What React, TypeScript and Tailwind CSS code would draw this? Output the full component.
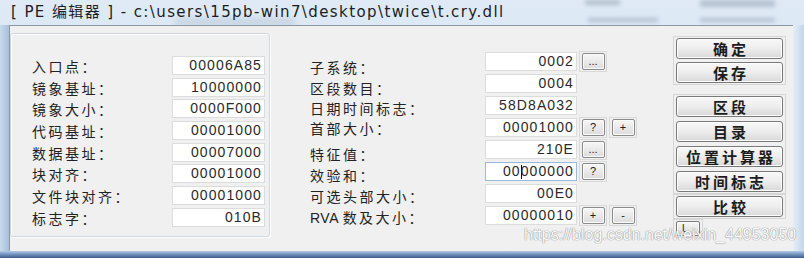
import React from "react";

const leftRows = [
  { label: "入口点：", value: "00006A85" },
  { label: "镜象基址：", value: "10000000" },
  { label: "镜象大小：", value: "0000F000" },
  { label: "代码基址：", value: "00001000" },
  { label: "数据基址：", value: "00007000" },
  { label: "块对齐：", value: "00001000" },
  { label: "文件块对齐：", value: "00001000" },
  { label: "标志字：", value: "010B" },
];

type MidRow = { label: string; pre?: string; value: string; off: string; btns: string[]; focus?: boolean };

const midRows: MidRow[] = [
  { label: "子系统：", value: "0002", off: "translate-y-[6px]", btns: ["..."] },
  { label: "区段数目：", value: "0004", off: "translate-y-[5px]", btns: [] },
  { label: "日期时间标志：", value: "58D8A032", off: "translate-y-[3px]", btns: [] },
  { label: "首部大小：", value: "00001000", off: "translate-y-[1px]", btns: ["?", "+"] },
  { label: "特征值：", value: "210E", off: "translate-y-[5px]", btns: ["..."] },
  { label: "效验和：", value: "00000000", off: "translate-y-[4px]", btns: ["?"], focus: true },
  { label: "可选头部大小：", value: "00E0", off: "translate-y-[3px]", btns: [] },
  { label: "数及大小：", pre: "RVA ", value: "00000010", off: "translate-y-[2px]", btns: ["+", "-"] },
];

const labelCls =
  "font-['Noto_Sans_CJK_SC',sans-serif] text-[14px] leading-[19px] tracking-[2.5px] text-[#222222] whitespace-nowrap";

function Field({ value, focus, w }: { value: string; focus?: boolean; w: string }) {
  return (
    <div
      className={`${w} h-[19px] shrink-0 bg-white border ${
        focus ? "border-[#9bb9da]" : "border-[#dcdcdc]"
      } flex items-center justify-end pr-[2px] font-['Liberation_Sans',Arial,sans-serif] text-[14px] leading-[17px] tracking-[1.1px] text-[#2a2a2a]`}
    >
      {focus ? (
        <>
          {value.slice(0, 2)}
          <span className="inline-block w-[1px] h-[14px] bg-black -mr-[1px]" />
          {value.slice(2)}
        </>
      ) : (
        value
      )}
    </div>
  );
}

function SmallBtn({ t }: { t: string }) {
  return (
    <div className="w-[28px] h-[21px] border border-[#d9d9d9] flex items-center justify-center">
      <div className="w-[23px] h-[17px] rounded-[2px] border border-[#8a8a8a] bg-gradient-to-b from-[#f7f7f7] to-[#dcdcdc] shadow-[inset_0_0_0_1px_#fbfbfb] flex items-center justify-center font-['Liberation_Sans',Arial,sans-serif] text-[11px] leading-none text-[#222222]">
        {t}
      </div>
    </div>
  );
}

function Btn({ t }: { t: string }) {
  return (
    <div className="w-[107px] h-[21px] rounded-[3px] border border-[#7a7a7a] bg-gradient-to-b from-[#f8f8f8] via-[#ededed] to-[#d8d8d8] shadow-[inset_0_0_0_1px_#fcfcfc] flex items-center justify-center font-['Noto_Sans_CJK_SC',sans-serif] font-bold text-[15px] leading-none tracking-[3px] pl-[3px] text-[#1c1c1c]">
      {t}
    </div>
  );
}

export default function App() {
  return (
    <div className="w-[804px] h-[258px] relative overflow-hidden flex flex-col bg-gradient-to-b from-[#dfeaf6] via-[#d3e2f2] to-[#c4d7ec]">
      {/* blurred backdrop behind the glass title bar */}
      <div className="absolute left-[585px] top-[0px] w-[35px] h-[5px] bg-[#8794a3] blur-[2px] opacity-50" />
      <div className="absolute left-[700px] top-[0px] w-[75px] h-[7px] bg-[#8794a3] blur-[2px] opacity-45" />
      <div className="absolute left-[588px] top-[18px] w-[70px] h-[4px] bg-[#7f8fa2] blur-[2px] opacity-45" />
      <div className="absolute left-[700px] top-[18px] w-[75px] h-[4px] bg-[#7f8fa2] blur-[2px] opacity-45" />
      <div className="absolute left-[175px] top-[19px] w-[120px] h-[6px] bg-[#9aa9b8] blur-[3px] opacity-40" />

      <div className="relative h-[25px] pl-[11px] flex items-center font-['DejaVu_Sans','Noto_Sans_CJK_SC',sans-serif] text-[15px] tracking-[1.4px] text-[#1c1c24] whitespace-nowrap">
        [ PE 编辑器 ] - c:\users\15pb-win7\desktop\twice\t.cry.dll
      </div>

      <div className="relative flex h-[226px]">
        <div className="w-[9px] bg-gradient-to-r from-[#c8daed] to-[#a8bfd9]" />
        <div className="w-[784px] bg-[#f0f0f0] border-l border-t border-[#8d97a2] flex items-start">
          {/* left group */}
          <div className="mt-[7px] w-[260px] h-[204px] border border-[#d2d7dc] rounded-[3px] shadow-[inset_1px_1px_0_#ffffff,1px_1px_0_#ffffff] pt-[22px] pl-[21px] flex flex-col gap-[2.7px]">
            {leftRows.map((r) => (
              <div key={r.label} className="flex items-start h-[19px]">
                <div className={`w-[140px] translate-y-[1px] ${labelCls}`}>{r.label}</div>
                <Field value={r.value} w="w-[93px]" />
              </div>
            ))}
          </div>

          {/* middle */}
          <div className="ml-[40px] w-[330px] pt-[24.5px] flex flex-col">
            {midRows.map((r) => (
              <div key={r.label} className="flex items-center h-[22px]">
                <div className={`w-[175px] ${r.off} ${labelCls}`}>
                  {r.pre ? (
                    <span className="font-['Liberation_Sans',Arial,sans-serif] tracking-[0.5px]">{r.pre}</span>
                  ) : null}
                  {r.label}
                </div>
                <Field value={r.value} focus={r.focus} w="w-[92px]" />
                <div className="ml-[2px] flex gap-[2px]">
                  {r.btns.map((b, i) => (
                    <SmallBtn key={i} t={b} />
                  ))}
                </div>
              </div>
            ))}
          </div>

          {/* right buttons */}
          <div className="ml-[33px] mt-[10px] flex flex-col">
            <div className="border border-[#d6d6d6] px-[2px] py-[1px] flex flex-col gap-[3px]">
              <Btn t="确定" />
              <Btn t="保存" />
            </div>
            <div className="mt-[9px] border border-[#d6d6d6] px-[2px] py-[1px] flex flex-col gap-[4px]">
              <Btn t="区段" />
              <Btn t="目录" />
              <Btn t="位置计算器" />
              <Btn t="时间标志" />
            </div>
            <div className="border border-[#d6d6d6] px-[2px] py-[1px]">
              <Btn t="比较" />
            </div>
            <div className="w-[30px] border border-[#d6d6d6] px-[2px] py-[1px]">
              <div className="w-[24px] h-[15px] rounded-[2px] border border-[#7a7a7a] bg-gradient-to-b from-[#f8f8f8] to-[#d8d8d8] shadow-[inset_0_0_0_1px_#fcfcfc] flex items-end pl-[5px] pb-[1px] font-['Liberation_Sans',Arial,sans-serif] text-[10px] leading-none text-[#222222]">
                L
              </div>
            </div>
          </div>
        </div>
        <div className="flex-1 bg-gradient-to-r from-[#e4eef8] to-[#c4d6ea]" />
      </div>

      <div className="h-[7px] bg-gradient-to-b from-[#b2cae5] via-[#7090bb] to-[#3d5b88]" />

      <div className="absolute left-[524px] top-[226px] font-['Liberation_Sans',Arial,sans-serif] text-[16px] leading-[18px] text-[#fafafa] [text-shadow:0_0_1px_#8c8c8c,0_0_1px_#8c8c8c] whitespace-nowrap">
        https://blog.csdn.net/weixin_44953050
      </div>
    </div>
  );
}
